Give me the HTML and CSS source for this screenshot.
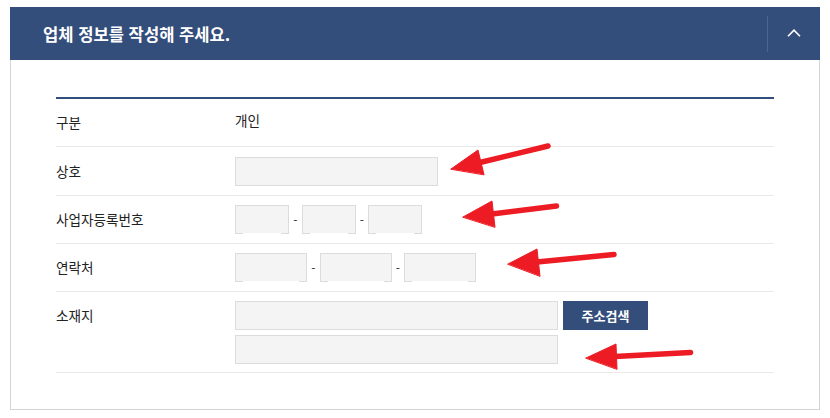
FILE: index.html
```html
<!DOCTYPE html>
<html lang="ko">
<head>
<meta charset="utf-8">
<title>업체 정보</title>
<link rel="stylesheet" href="styles.css">
</head>
<body>
<div class="panel">
  <div class="panel-head">
    <h2 class="panel-title">업체 정보를 작성해 주세요.</h2>
    <span class="head-divider"></span>
    <button class="toggle" type="button" aria-label="접기">
      <svg width="14" height="8" viewBox="0 0 14 8"><path d="M1 7.2 L7 1.2 L13 7.2" fill="none" stroke="#fff" stroke-width="1.6"/></svg>
    </button>
  </div>
  <div class="panel-body">
    <div class="form-table">
      <div class="row">
        <div class="label">구분</div>
        <div class="value"><span class="plain">개인</span></div>
      </div>
      <div class="row row-tall">
        <div class="label">상호</div>
        <div class="value"><input class="field field-name" type="text"></div>
      </div>
      <div class="row">
        <div class="label">사업자등록번호</div>
        <div class="value">
          <span class="seg"><input class="field field-biz" type="text"></span>
          <span class="dash">-</span>
          <span class="seg"><input class="field field-biz" type="text"></span>
          <span class="dash">-</span>
          <span class="seg"><input class="field field-biz" type="text"></span>
        </div>
      </div>
      <div class="row">
        <div class="label">연락처</div>
        <div class="value">
          <span class="seg"><input class="field field-tel" type="text"></span>
          <span class="dash">-</span>
          <span class="seg"><input class="field field-tel" type="text"></span>
          <span class="dash">-</span>
          <span class="seg"><input class="field field-tel" type="text"></span>
        </div>
      </div>
      <div class="row row-addr">
        <div class="label">소재지</div>
        <div class="value value-stack">
          <div class="addr-line">
            <input class="field field-addr" type="text">
            <button class="btn-search" type="button">주소검색</button>
          </div>
          <input class="field field-addr" type="text">
        </div>
      </div>
    </div>
  </div>
</div>

<svg class="annot" width="830" height="418" viewBox="0 0 830 418" aria-hidden="true">
  <g fill="#ed1c24" stroke="#ed1c24" stroke-linecap="round" stroke-linejoin="round">
    <line x1="480" y1="162.5" x2="548" y2="146" stroke-width="5.5"/>
    <polygon points="451,169 478,150 484,174.5" stroke-width="1"/>
    <line x1="492" y1="214" x2="556.5" y2="206" stroke-width="5.5"/>
    <polygon points="463,217 492,201 495,227" stroke-width="1"/>
    <line x1="537" y1="262" x2="614" y2="254.5" stroke-width="5.5"/>
    <polygon points="508,264 537,249 540,276" stroke-width="1"/>
    <line x1="615" y1="356.5" x2="690.5" y2="352.5" stroke-width="5.5"/>
    <polygon points="586,358 616,344 617,369" stroke-width="1"/>
  </g>
</svg>
</body>
</html>
```
FILE: styles.css
```css
html, body {
  margin: 0;
  background: #fff;
}
body {
  padding: 7px 10px 0;
  font-family: "Noto Sans CJK KR", "Noto Sans", sans-serif;
  color: #333;
  position: relative;
}
.panel {
  width: 810px;
}
.panel-head {
  height: 53px;
  background: #344e7b;
  display: flex;
  align-items: center;
}
.panel-title {
  flex: 1;
  margin: 0;
  padding-left: 33px;
  font-size: 16.6px;
  font-weight: 700;
  color: #fff;
  line-height: 20px;
}
.head-divider {
  width: 1px;
  height: 36px;
  background: #4c6592;
}
.toggle {
  width: 52px;
  height: 53px;
  border: 0;
  padding: 0;
  background: transparent;
  display: flex;
  align-items: center;
  justify-content: center;
}
.toggle svg {
  display: block;
  margin-top: -1px;
}
.panel-body {
  border: 1px solid #d4d4d4;
  border-top: 0;
  padding: 37px 45px 36px;
}
.form-table {
  border-top: 2px solid #344e7b;
}
.row {
  display: flex;
  border-bottom: 1px solid #e9e9e9;
  padding: 9px 0;
}
.row-tall {
  padding: 10px 0 9px;
}
.row-addr {
  padding: 9px 0 8px;
}
.label {
  width: 179px;
  flex: none;
  font-size: 13.6px;
  line-height: 29px;
  color: #222;
}
.value {
  display: flex;
  align-items: center;
}
.plain {
  font-size: 13.6px;
  line-height: 29px;
  color: #222;
  position: relative;
  top: -2px;
}
.value-stack {
  flex-direction: column;
  align-items: flex-start;
  gap: 5px;
}
.addr-line {
  display: flex;
  gap: 5px;
}
.field {
  box-sizing: border-box;
  height: 29px;
  margin: 0;
  border: 1px solid #dcdcdc;
  background: #f4f4f4;
  padding: 0 8px;
  font-family: inherit;
  font-size: 13px;
  color: #333;
  display: block;
}
.field-name { width: 203px; }
.field-biz { width: 54px; }
.field-tel { width: 72px; }
.field-addr { width: 323px; }
.seg {
  position: relative;
  display: block;
}
.seg::after {
  content: "";
  position: absolute;
  left: 8px;
  right: 8px;
  bottom: 0;
  height: 1px;
  background: #fff;
}
.dash {
  width: 12.5px;
  text-align: center;
  font-size: 12px;
  color: #333;
  line-height: 29px;
}
.btn-search {
  width: 85px;
  height: 29px;
  border: 0;
  background: #344e7b;
  color: #fff;
  font-family: inherit;
  font-size: 13px;
  font-weight: 700;
  padding: 0;
}
.annot {
  position: absolute;
  left: 0;
  top: 0;
  pointer-events: none;
}
```
